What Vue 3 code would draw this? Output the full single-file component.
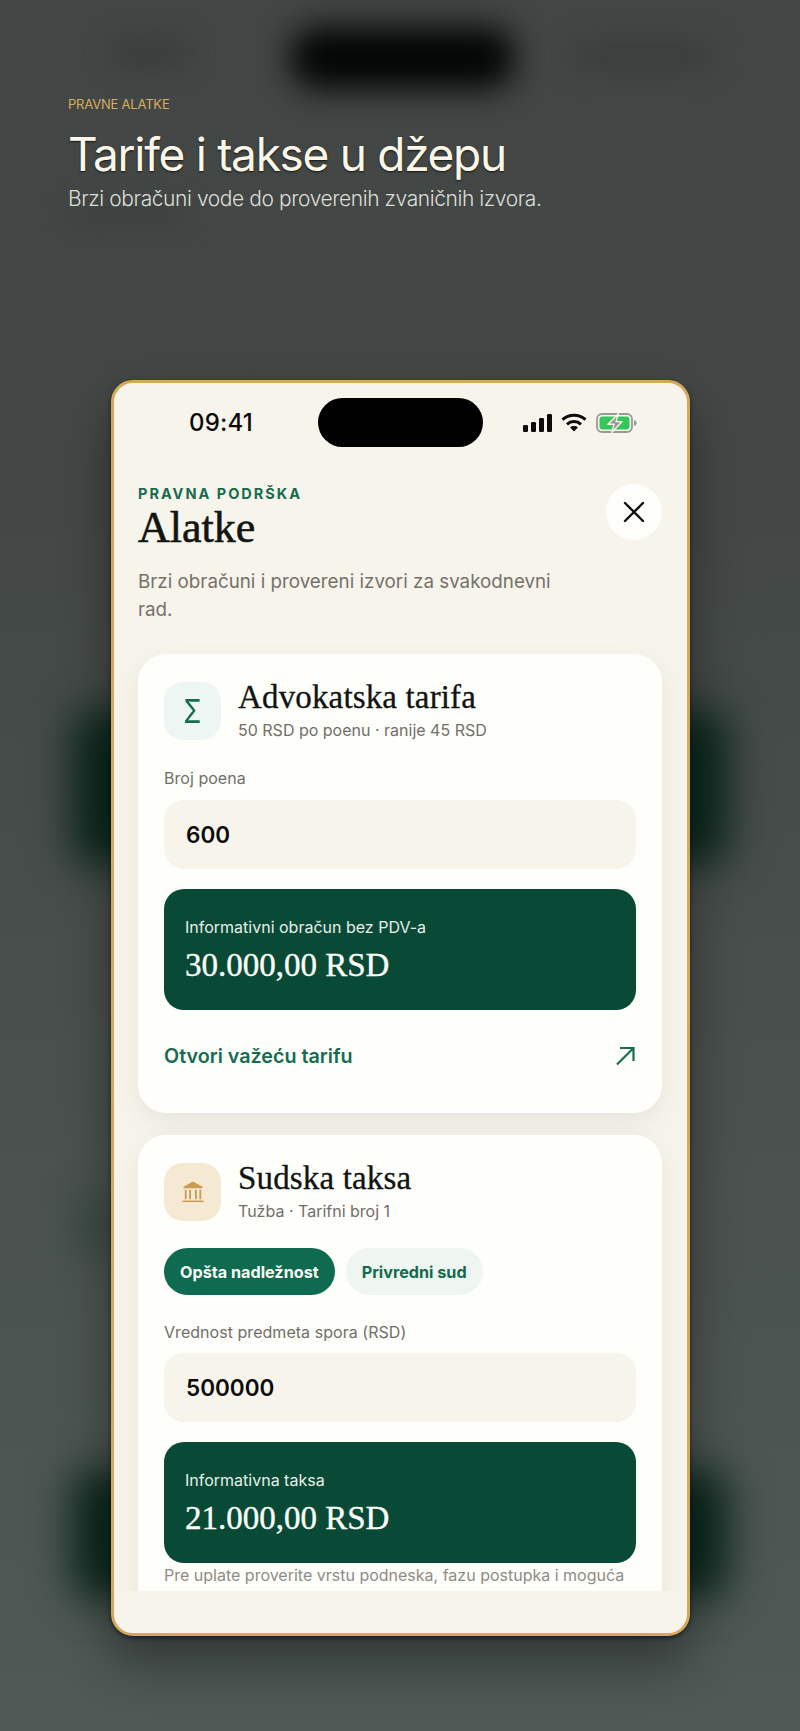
<script setup>
const blobs = ['notch', 'clock', 'icons', 'res1', 'res2', 'chipsblur', 'headblur']
</script>

<template>
  <div class="page">
    <div class="backdrop" aria-hidden="true">
      <span v-for="b in blobs" :key="b" class="blob" :class="b"></span>
    </div>

    <header class="intro">
      <p class="kicker">PRAVNE ALATKE</p>
      <h1 class="headline">Tarife i takse u džepu</h1>
      <p class="lede">Brzi obračuni vode do proverenih zvaničnih izvora.</p>
    </header>

    <main class="phone">
      <div class="status">
        <span class="time">09:41</span>
        <span class="island"></span>
        <span class="sys">
          <svg class="signal" width="29" height="18" viewBox="0 0 29 18">
            <rect x="0" y="11" width="5" height="7" rx="1.2" />
            <rect x="8" y="8" width="5" height="10" rx="1.2" />
            <rect x="16" y="4" width="5" height="14" rx="1.2" />
            <rect x="24" y="0" width="5" height="18" rx="1.2" />
          </svg>
          <svg class="wifi" width="26" height="19" viewBox="0 0 26 19">
            <path d="M1.5 6.6C7.8.8 18.2.8 24.5 6.6" />
            <path d="M6 11.3c4-3.6 10-3.6 14 0" />
            <path class="dot" d="M13 18.6l-3.9-4.1c2.2-1.9 5.6-1.9 7.8 0z" />
          </svg>
          <svg class="battery" width="41" height="20" viewBox="0 0 41 20">
            <rect x="1" y="1" width="35" height="18" rx="5" fill="none" stroke="#9a9a94" stroke-width="1.8" />
            <rect x="3.5" y="3.5" width="30" height="13" rx="3" fill="#34c759" />
            <path d="M38 7c1.600.4 2.600 1.500 2.600 3S39.600 12.600 38 13z" fill="#9a9a94" />
            <path d="M22.500 0.500 12 11.200h6L15.800 19.500 26 8.600h-6z" fill="#9a9a94" stroke="#f7f4ec" stroke-width="1.400" stroke-linejoin="round" />
          </svg>
        </span>
      </div>

      <div class="top">
        <div class="top-row">
          <div>
            <p class="eyebrow">PRAVNA PODRŠKA</p>
            <h2 class="title">Alatke</h2>
          </div>
          <button class="close" type="button" aria-label="Zatvori">
            <svg width="22" height="22" viewBox="0 0 22 22">
              <path d="M2 2l18 18M20 2L2 20" />
            </svg>
          </button>
        </div>
        <p class="desc">Brzi obračuni i provereni izvori za svakodnevni rad.</p>
      </div>

      <div class="scroll">
        <section class="card">
          <div class="card-head">
            <span class="badge badge-green"><span class="sigma">Σ</span></span>
            <div>
              <h3 class="card-title">Advokatska tarifa</h3>
              <p class="card-sub">50 RSD po poenu · ranije 45 RSD</p>
            </div>
          </div>
          <p class="label first">Broj poena</p>
          <div class="field">600</div>
          <div class="result">
            <p class="result-label">Informativni obračun bez PDV-a</p>
            <p class="result-value">30.000,00 RSD</p>
          </div>
          <a class="link">
            <span>Otvori važeću tarifu</span>
            <svg width="20" height="20" viewBox="0 0 20 20">
              <path d="M2 18.500 18 2.500M5 2h13.500v13" />
            </svg>
          </a>
        </section>

        <section class="card">
          <div class="card-head">
            <span class="badge badge-gold">
              <svg width="22" height="22" viewBox="0 0 22 22">
                <path d="M11 0.500 20.500 5.800V7.200H1.500V5.800z" />
                <rect x="2.800" y="8.800" width="1.800" height="9.400" />
                <rect x="7.200" y="8.800" width="1.800" height="9.400" />
                <rect x="13" y="8.800" width="1.800" height="9.400" />
                <rect x="17.400" y="8.800" width="1.800" height="9.400" />
                <rect x="0.500" y="19.600" width="21" height="1.500" />
              </svg>
            </span>
            <div>
              <h3 class="card-title">Sudska taksa</h3>
              <p class="card-sub">Tužba · Tarifni broj 1</p>
            </div>
          </div>
          <div class="chips">
            <span class="chip chip-on">Opšta nadležnost</span>
            <span class="chip">Privredni sud</span>
          </div>
          <p class="label">Vrednost predmeta spora (RSD)</p>
          <div class="field">500000</div>
          <div class="result">
            <p class="result-label">Informativna taksa</p>
            <p class="result-value">21.000,00 RSD</p>
          </div>
          <p class="note">Pre uplate proverite vrstu podneska, fazu postupka i moguća</p>
        </section>
      </div>
    </main>
  </div>
</template>

<style>
html, body { margin: 0; background: #49504d; }
</style>

<style scoped>
.page {
  position: relative;
  width: 800px;
  height: 1731px;
  overflow: hidden;
  background: linear-gradient(180deg, #424644 0%, #434846 30%, #4a514e 65%, #4f5955 100%);
  font-family: Inter, "Noto Sans", sans-serif;
  color: #111;
}
p, h1, h2, h3 { margin: 0; font-weight: 400; }

.backdrop { position: absolute; inset: 0; overflow: hidden; }
.blob { position: absolute; display: block; }
.notch { left: 290px; top: 27px; width: 225px; height: 62px; background: #030505; border-radius: 28px; filter: blur(16px); }
.clock { left: 115px; top: 42px; width: 70px; height: 22px; background: #363a38; filter: blur(14px); }
.icons { left: 575px; top: 44px; width: 135px; height: 24px; background: #383d3a; filter: blur(14px); }
.res1 { left: 72px; top: 710px; width: 656px; height: 155px; background: #0a261d; border-radius: 20px; filter: blur(20px); }
.res2 { left: 72px; top: 1470px; width: 656px; height: 128px; background: #0a261d; border-radius: 20px; filter: blur(20px); }
.chipsblur { left: 70px; top: 1195px; width: 60px; height: 60px; background: #3f4c48; filter: blur(14px); }
.headblur { left: 70px; top: 205px; width: 110px; height: 22px; background: #3b403e; filter: blur(14px); }

.intro {
  position: relative;
  padding: 96px 0 0 68px;
  height: 380px;
  box-sizing: border-box;
}
.kicker { font-size: 13px; line-height: 16px; color: #d6ad60; letter-spacing: -0.2px; }
.headline {
  margin-top: 15px;
  font-size: 46px;
  line-height: 54px;
  letter-spacing: -1.300px;
  color: #fbf6e6;
  text-shadow: 0 1px 2px rgba(0, 0, 0, 0.7);
}
.lede { margin-top: 4px; font-size: 21px; line-height: 28px; font-weight: 300; color: #dcdfd8; letter-spacing: -0.420px; }

.phone {
  position: relative;
  width: 579px;
  height: 1256px;
  margin-left: 111px;
  box-sizing: border-box;
  border: 3px solid #d4a95c;
  border-radius: 22px;
  background: #f7f4ec;
  box-shadow: 0 26px 50px rgba(0, 0, 0, 0.38), 0 2px 4px rgba(0, 0, 0, 0.5);
  display: flex;
  flex-direction: column;
  overflow: hidden;
}

.status {
  display: grid;
  grid-template-columns: 204px 165px 1fr;
  align-items: center;
  margin-top: 15px;
  height: 49px;
}
.time { margin-left: 75px; font-size: 24px; font-weight: 500; color: #0b0b0b; letter-spacing: 0.2px; }
.island { height: 49px; background: #000; border-radius: 25px; }
.sys { display: flex; align-items: center; margin-left: 40px; gap: 9px; }
.signal { fill: #0b0b0b; }
.wifi path { fill: none; stroke: #0b0b0b; stroke-width: 3; stroke-linecap: butt; }
.wifi .dot { fill: #0b0b0b; stroke: none; }

.top { padding: 37px 25px 0 24px; }
.top-row { display: flex; justify-content: space-between; align-items: flex-start; }
.eyebrow { padding-top: 2px; font-size: 14.500px; line-height: 16px; font-weight: 700; letter-spacing: 2px; color: #176b4e; }
.title {
  margin-top: 1px;
  font-family: "Liberation Serif", serif;
  font-size: 44px;
  line-height: 50px;
  color: #121612;
  -webkit-text-stroke: 0.6px #121612;
}
.close {
  width: 56px;
  height: 56px;
  padding: 0;
  border: 0;
  border-radius: 50%;
  background: #fefefb;
  display: flex;
  align-items: center;
  justify-content: center;
}
.close path { fill: none; stroke: #0d0d0d; stroke-width: 2.400; stroke-linecap: round; }
.desc { margin-top: 15px; width: 440px; font-size: 18.800px; line-height: 28px; color: #75716a; }

.scroll {
  flex: 1;
  min-height: 0;
  margin: 16px 0 42px;
  padding: 14px 25px 0 24px;
  overflow: hidden;
  display: flex;
  flex-direction: column;
  gap: 22px;
}
.card {
  flex: none;
  padding: 28px 26px 41px 26px;
  border-radius: 28px;
  background: #fefefb;
  box-shadow: 0 10px 28px rgba(70, 60, 40, 0.08);
}
.card-head { display: flex; gap: 17px; height: 58px; }
.badge {
  flex: none;
  width: 57px;
  height: 58px;
  border-radius: 19px;
  display: flex;
  align-items: center;
  justify-content: center;
}
.badge-green { background: #eef6f3; color: #176b4e; }
.sigma { display: inline-block; font-size: 33px; line-height: 1; transform: scaleX(0.8); }
.badge-gold { background: #f5e9d4; fill: #c99a50; }
.card-title {
  font-family: "Liberation Serif", serif;
  font-size: 33px;
  line-height: 30px;
  color: #111512;
  letter-spacing: 0.150px;
  -webkit-text-stroke: 0.3px #111512;
}
.card-sub { margin-top: 8px; font-size: 16px; line-height: 20px; color: #716f69; }
.label { margin-top: 27px; font-size: 16px; line-height: 20px; color: #716f69; letter-spacing: 0.04px; }
.label.first { margin-top: 28px; margin-bottom: 12px; }
.field {
  margin-top: 11px;
  height: 69px;
  box-sizing: border-box;
  padding-left: 22px;
  display: flex;
  align-items: center;
  border-radius: 20px;
  background: #f7f4ec;
  font-size: 22.500px;
  font-weight: 600;
  color: #0b0b0b;
}
.result {
  margin-top: 20px;
  height: 121px;
  box-sizing: border-box;
  padding: 28px 21px 0;
  border-radius: 20px;
  background: #084a36;
  color: #fff;
}
.result-label { font-size: 16px; line-height: 20px; color: #e9efe9; }
.result-value {
  margin-top: 9px;
  font-family: "Liberation Serif", serif;
  font-size: 33px;
  line-height: 38px;
  color: #fdfdf8;
  -webkit-text-stroke: 0.4px #fdfdf8;
}
.link {
  margin-top: 30px;
  height: 32px;
  display: flex;
  align-items: center;
  justify-content: space-between;
  font-size: 19.700px;
  font-weight: 600;
  color: #176b4e;
}
.link svg { margin-right: 1px; }
.link path { fill: none; stroke: #176b4e; stroke-width: 2.200; }
.chips { display: flex; gap: 11px; margin-top: 27px; }
.chip {
  height: 47px;
  padding: 0 16px;
  display: flex;
  align-items: center;
  border-radius: 24px;
  background: #eff6f2;
  color: #126b4c;
  font-size: 16.200px;
  font-weight: 700;
}
.chip-on { background: #0f6b4f; color: #fbfbf6; }
.note { margin-top: 1px; font-size: 16px; line-height: 22px; color: #8e8c86; white-space: nowrap; }
</style>
